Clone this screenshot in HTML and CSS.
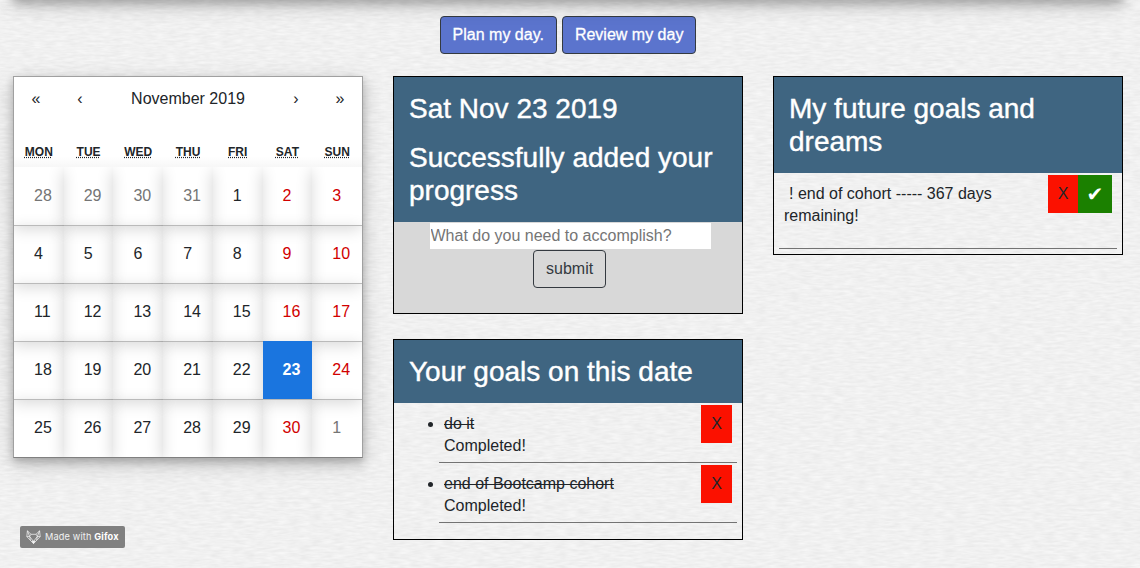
FILE: index.html
```html
<!DOCTYPE html>
<html lang="en">
<head>
<meta charset="utf-8">
<title>My day</title>
<link rel="stylesheet" href="styles.css">
</head>
<body>
<svg class="paper" width="1140" height="568" aria-hidden="true">
  <filter id="grain" x="0" y="0" width="100%" height="100%" color-interpolation-filters="sRGB">
    <feTurbulence type="fractalNoise" baseFrequency="0.09 0.42" numOctaves="2" seed="4"/>
    <feColorMatrix values="0.075 0 0 0 0.905  0.075 0 0 0 0.905  0.075 0 0 0 0.905  0 0 0 0 1"/>
  </filter>
  <rect width="1140" height="568" filter="url(#grain)"/>
</svg>
<div class="topbar"></div>
<main class="page">
  <nav class="actions">
    <button class="btn btn-primary">Plan my day.</button>
    <button class="btn btn-primary">Review my day</button>
  </nav>
  <div class="columns">
    <section class="calendar">
      <div class="cal-nav">
        <span class="arrow">«</span><span class="arrow">‹</span><span class="label">November 2019</span><span class="arrow">›</span><span class="arrow">»</span>
      </div>
      <div class="weekdays">
        <div><abbr>MON</abbr></div><div><abbr>TUE</abbr></div><div><abbr>WED</abbr></div><div><abbr>THU</abbr></div><div><abbr>FRI</abbr></div><div><abbr>SAT</abbr></div><div><abbr>SUN</abbr></div>
      </div>
      <div class="days">
        <div class="day other">28</div><div class="day other">29</div><div class="day other">30</div><div class="day other">31</div><div class="day">1</div><div class="day weekend">2</div><div class="day weekend">3</div>
        <div class="day">4</div><div class="day">5</div><div class="day">6</div><div class="day">7</div><div class="day">8</div><div class="day weekend">9</div><div class="day weekend">10</div>
        <div class="day">11</div><div class="day">12</div><div class="day">13</div><div class="day">14</div><div class="day">15</div><div class="day weekend">16</div><div class="day weekend">17</div>
        <div class="day">18</div><div class="day">19</div><div class="day">20</div><div class="day">21</div><div class="day">22</div><div class="day active">23</div><div class="day weekend">24</div>
        <div class="day">25</div><div class="day">26</div><div class="day">27</div><div class="day">28</div><div class="day">29</div><div class="day weekend">30</div><div class="day other">1</div>
      </div>
    </section>
    <div class="middle">
      <section class="card">
        <header class="card-head"><h3>Sat Nov 23 2019</h3><h3>Successfully added your progress</h3></header>
        <form class="entry">
          <input class="field" type="text" placeholder="What do you need to accomplish?">
          <button class="btn btn-outline" type="button">submit</button>
        </form>
      </section>
      <section class="card">
        <header class="card-head"><h3>Your goals on this date</h3></header>
        <ul class="goals">
          <li><div class="goal"><div><s>do it</s><br>Completed!</div><button class="mark remove">X</button></div></li>
          <li><div class="goal"><div><s>end of Bootcamp cohort</s><br>Completed!</div><button class="mark remove">X</button></div></li>
        </ul>
      </section>
    </div>
    <section class="card">
      <header class="card-head"><h3>My future goals and dreams</h3></header>
      <div class="dreams">
        <div class="goal dream">
          <div class="dream-text">! end of cohort ----- 367 days remaining!</div>
          <button class="mark remove">X</button><button class="mark done">✔</button>
        </div>
      </div>
    </section>
  </div>
</main>
<div class="badge">
  <svg width="15" height="15" viewBox="0 0 15 15" fill="none" stroke="#f2f2f2" stroke-width=".75" stroke-linejoin="round">
    <path d="M1.4 .8 5 4.3H10L13.6 .8 14.2 6.6 7.5 13.6 .8 6.6ZM1.4 .8 3.6 6.4 7.5 11.5 11.4 6.4 13.6 .8M5 4.3 3.6 6.4.8 6.6M10 4.3 11.4 6.4 14.2 6.6M3.6 6.4 4.4 10.2M11.4 6.4 10.6 10.2"/>
    <path d="M6 11.2H9L7.5 13.6Z" fill="#fff"/>
  </svg>
  <span>Made with <b>Gifox</b></span>
</div>
</body>
</html>
```
FILE: styles.css
```css
* { box-sizing: border-box; }

body {
  margin: 0;
  height: 568px;
  overflow: hidden;
  background: #f0f0f0;
  color: #212529;
  font: 16px/22px "Liberation Sans", Arial, sans-serif;
}

button, input { font: inherit; }

.paper {
  position: absolute;
  top: 0;
  left: 0;
  z-index: -1;
}

/* lower edge of the header, scrolled out of view */
.topbar {
  position: absolute;
  top: -20px;
  left: 13px;
  width: 1110px;
  height: 20px;
  box-shadow: 0 4px 8px rgba(0, 0, 0, .2), 0 6px 20px rgba(0, 0, 0, .19);
}

.page { padding: 16px 17px 0 13px; }

.actions {
  display: flex;
  justify-content: center;
  gap: 5px;
  margin-bottom: 22px;
}

.btn {
  height: 38px;
  padding: 0 12px;
  border: 1px solid #343a40;
  border-radius: 4px;
  line-height: 24px;
}

.btn-primary { background: #5b74cd; color: #fff; -webkit-text-stroke: .3px #fff; }
.btn-outline { width: 73px; margin-left: 3px; background: transparent; color: #343a40; }

.columns {
  display: grid;
  grid-template-columns: repeat(3, 350px);
  gap: 30px;
  align-items: start;
}

.calendar {
  background: #fff;
  border: 1px solid #a0a0a0;
  border-bottom-color: #808080;
  box-shadow: 0 4px 8px rgba(0, 0, 0, .2), 0 6px 20px rgba(0, 0, 0, .19);
}

.cal-nav {
  display: flex;
  align-items: center;
  height: 44px;
  margin-bottom: 16px;
  text-align: center;
}

.arrow { width: 44px; }
.label { flex: 1; }

.weekdays, .days {
  display: grid;
  grid-template-columns: repeat(7, 1fr);
}

.weekdays {
  height: 30px;
  padding-top: 4px;
  background: linear-gradient(#fff 65%, #f7f7f7);
  text-align: center;
  font-size: 12px;
  font-weight: bold;
}

abbr { text-decoration: underline dotted; }

.days { overflow: hidden; }

.day {
  height: 58px;
  padding: 18px 0 0 20px;
  box-shadow: 0 1px 0 #bababa, -1px 4px 16px rgba(0, 0, 0, .16);
}

.other { color: #757575; }
.weekend { color: #d10000; }
.active { position: relative; background: #1a75df; color: #fff; font-weight: bold; }

.middle { display: grid; gap: 25px; }

.card { border: 1px solid #000; }

.card-head {
  display: grid;
  gap: 16px;
  padding: 15px;
  background: #3f6581;
  color: #fff;
}

h3 {
  margin: 0;
  font-size: 28px;
  font-weight: normal;
  line-height: 33px;
  -webkit-text-stroke: .4px #fff;
}

.entry {
  display: flex;
  flex-direction: column;
  align-items: center;
  height: 91px;
  padding-top: 1px;
  background: #d8d8d8;
}

.field {
  width: 281px;
  height: 26px;
  margin: 0 0 1px 4px;
  padding: 0 1px;
  border: 0;
  background: #fff;
}

.field::placeholder { color: #757575; }

.goals { margin: 0 5px 16px; padding-left: 40px; }

.goals li {
  height: 60px;
  padding: 2px 5px 0;
  border-bottom: 1px solid #737373;
}

.goals { list-style: none; }

.goals li::before {
  content: "";
  float: left;
  width: 5px;
  height: 5px;
  margin: 17px 0 0 -16px;
  border-radius: 50%;
  background: #212529;
}

.goal { display: flex; align-items: flex-start; }
.goal > div { flex: 1; padding-top: 8px; }

.mark {
  width: 31px;
  height: 38px;
  padding: 0;
  border: 0;
  color: #212529;
}

.remove { background: #fb1100; }
.done { width: 34px; background: #1b8000; color: #fff; font: 20px/36px "DejaVu Sans", sans-serif; }

.dreams { padding: 0 5px 5px; }

.dream {
  height: 76px;
  padding: 2px 5px 0;
  border-bottom: 1px solid #737373;
}

.dream .remove { width: 30px; }
.dream-text { text-indent: 5px; }

.badge {
  position: absolute;
  left: 20px;
  top: 526px;
  display: flex;
  align-items: center;
  gap: 4px;
  width: 105px;
  height: 22px;
  padding-left: 6px;
  border-radius: 2px;
  background: #808080;
  color: #f2f2f2;
  font: 9.2px/22px Inter, sans-serif;
  letter-spacing: .15px;
  white-space: nowrap;
}

.badge b { color: #fff; }
```
